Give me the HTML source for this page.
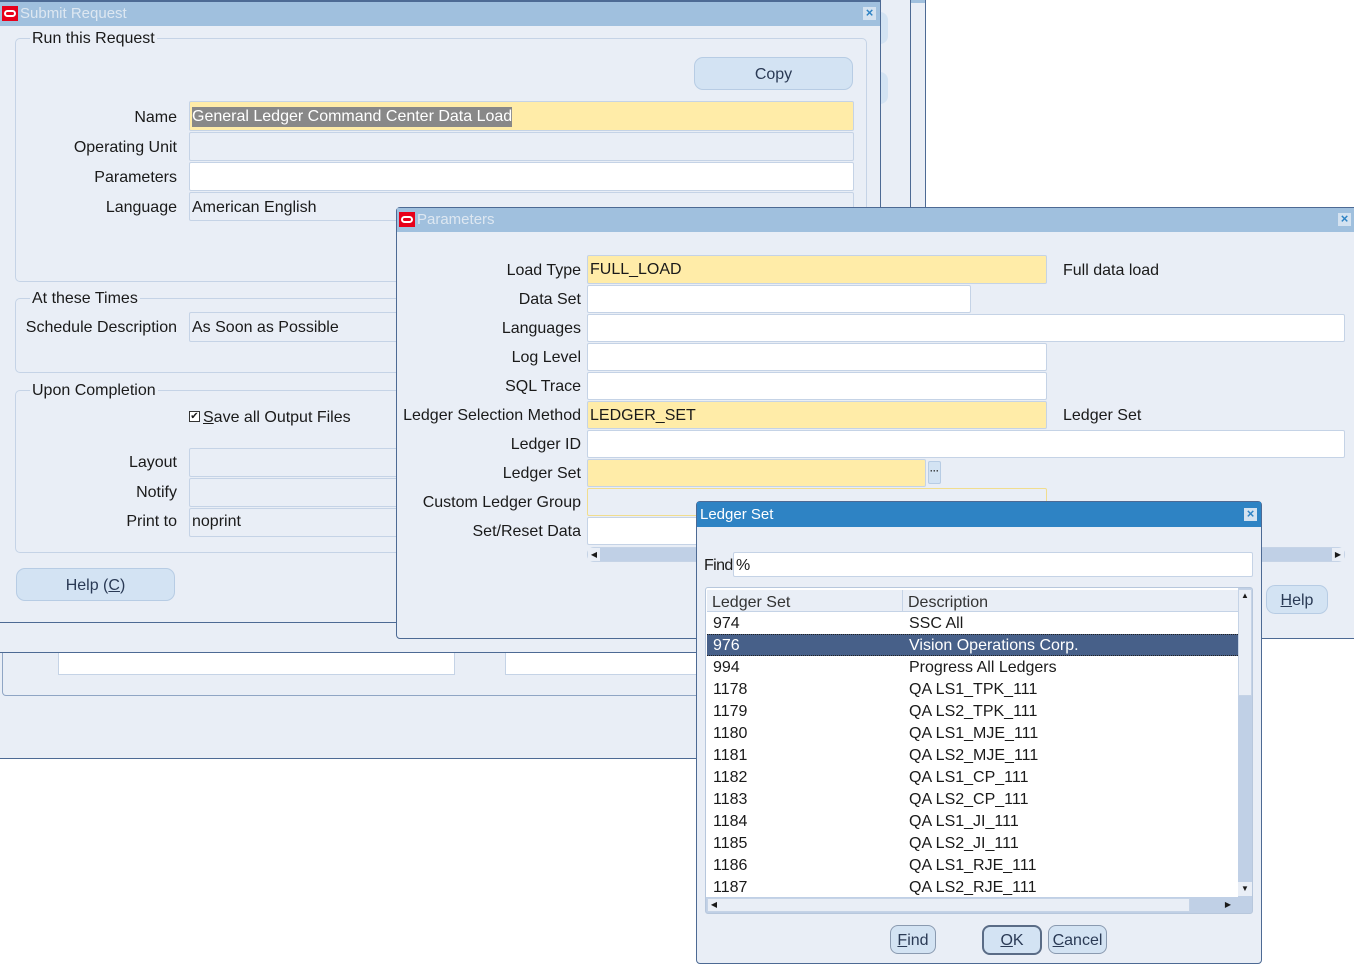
<!DOCTYPE html>
<html><head><meta charset="utf-8"><style>
*{box-sizing:border-box;margin:0;padding:0}
body{width:1354px;height:965px;background:#fff;position:relative;overflow:hidden;font-family:"Liberation Sans",Arial,sans-serif;font-size:16px;color:#1a1a1a}
.a{position:absolute}
.win{position:absolute;background:#e9eef6;border:1px solid #4d6a94}
.tb{position:absolute;left:0;right:0;top:0;height:24px;background:#a0c0de;color:#dde7f1;font-size:15px;line-height:24px;padding-left:20px}
.ico{position:absolute;left:2px;top:4px;width:16px;height:15px;background:#e8001a}
.ico:after{content:"";position:absolute;left:2px;top:4px;width:12px;height:7px;border:2px solid #fff;border-radius:5px;box-sizing:border-box}
.x{position:absolute;right:4px;top:5px;width:13px;height:13px;background:#d4e2f0;color:#2e83c4;font-size:13px;line-height:12px;text-align:center;font-weight:bold}
.grp{position:absolute;border:1px solid #c5d3e6;border-radius:5px}
.gl{position:absolute;background:#e9eef6;padding:0 2px;line-height:18px}
.lb{position:absolute;text-align:right;line-height:20px;white-space:nowrap}
.f{position:absolute;border:1px solid #c5d3e6;border-radius:2px;background:#e9eef6;line-height:26px;padding-left:2px;white-space:nowrap;overflow:hidden}
.w{background:#fff}
.y{background:#ffeca8}
.btn{position:absolute;background:#d3e3f3;border:1px solid #b7cce4;border-radius:9px;text-align:center;color:#2a3a55}
.row{position:absolute;left:1px;height:22px;line-height:23px;width:531px}
.row span{position:absolute}
</style></head><body>

<div class="a" style="left:0;top:0;width:926px;height:759px;background:#e9eef6;border-right:1px solid #4d6a94;border-bottom:1px solid #4d6a94"></div>
<div class="a" style="left:910px;top:0;width:1px;height:653px;background:#4d6a94"></div>
<div class="a" style="left:911px;top:0;width:14px;height:3px;background:#a0c0de"></div>
<div class="a" style="left:0;top:652px;width:926px;height:1px;background:#4d6a94"></div>
<div class="a" style="left:2px;top:653px;width:924px;height:43px;border:1px solid #8fa5c4;border-top:none;border-radius:0 0 0 4px"></div>
<div class="a" style="left:58px;top:653px;width:397px;height:22px;background:#fff;border:1px solid #c5d3e6;border-top:none"></div>
<div class="a" style="left:505px;top:653px;width:300px;height:22px;background:#fff;border:1px solid #c5d3e6;border-top:none"></div>
<div class="a" style="left:880px;top:12px;width:8px;height:32px;background:#d3e3f3;border-radius:0 8px 8px 0"></div>
<div class="a" style="left:880px;top:72px;width:8px;height:32px;background:#d3e3f3;border-radius:0 8px 8px 0"></div>

<div class="win" style="left:-1px;top:0;width:882px;height:623px;border-top:2px solid #4d6a94">
  <div class="tb"><div class="ico"></div>Submit Request<div class="x">×</div></div>
  <div class="grp" style="left:15px;top:36px;width:852px;height:244px"></div>
  <div class="gl" style="left:30px;top:28px">Run this Request</div>
  <div class="btn" style="left:694px;top:55px;width:159px;height:33px;line-height:33px">Copy</div>
  <div class="lb" style="right:703px;top:106px">Name</div>
  <div class="f y" style="left:189px;top:99px;width:665px;height:30px;line-height:29px"><span style="background:#888;color:#fff;line-height:20px;display:inline-block">General Ledger Command Center Data Load</span></div>
  <div class="lb" style="right:703px;top:136px">Operating Unit</div>
  <div class="f" style="left:189px;top:130px;width:665px;height:29px"></div>
  <div class="lb" style="right:703px;top:166px">Parameters</div>
  <div class="f w" style="left:189px;top:160px;width:665px;height:29px"></div>
  <div class="lb" style="right:703px;top:196px">Language</div>
  <div class="f" style="left:189px;top:190px;width:665px;height:29px;line-height:29px">American English</div>

  <div class="grp" style="left:15px;top:296px;width:852px;height:75px"></div>
  <div class="gl" style="left:30px;top:288px">At these Times</div>
  <div class="lb" style="right:703px;top:316px">Schedule Description</div>
  <div class="f" style="left:189px;top:310px;width:400px;height:30px;line-height:29px">As Soon as Possible</div>

  <div class="grp" style="left:15px;top:388px;width:852px;height:163px"></div>
  <div class="gl" style="left:30px;top:380px">Upon Completion</div>
  <div class="a" style="left:189px;top:409px;width:11px;height:11px;border:1px solid #333;background:#fff;font-size:10px;line-height:9px;text-align:center">✔</div>
  <div class="a" style="left:203px;top:406px;line-height:20px"><u>S</u>ave all Output Files</div>
  <div class="lb" style="right:703px;top:451px">Layout</div>
  <div class="f" style="left:189px;top:446px;width:400px;height:29px"></div>
  <div class="lb" style="right:703px;top:481px">Notify</div>
  <div class="f" style="left:189px;top:476px;width:400px;height:29px"></div>
  <div class="lb" style="right:703px;top:510px">Print to</div>
  <div class="f" style="left:189px;top:506px;width:400px;height:29px">noprint</div>
  <div class="btn" style="left:16px;top:566px;width:159px;height:33px;line-height:33px">Help (<u>C</u>)</div>
</div>

<div class="win" style="left:396px;top:207px;width:960px;height:432px;border-radius:4px 0 0 4px">
  <div class="tb"><div class="ico"></div>Parameters<div class="x">×</div></div>
  <div class="lb" style="right:774px;top:53px">Load Type</div>
  <div class="f y" style="left:190px;top:47px;width:460px;height:29px;line-height:28px">FULL_LOAD</div>
  <div class="a" style="left:666px;top:53px;line-height:20px">Full data load</div>
  <div class="lb" style="right:774px;top:82px">Data Set</div>
  <div class="f w" style="left:190px;top:77px;width:384px;height:28px"></div>
  <div class="lb" style="right:774px;top:111px">Languages</div>
  <div class="f w" style="left:190px;top:106px;width:758px;height:28px"></div>
  <div class="lb" style="right:774px;top:140px">Log Level</div>
  <div class="f w" style="left:190px;top:135px;width:460px;height:28px"></div>
  <div class="lb" style="right:774px;top:169px">SQL Trace</div>
  <div class="f w" style="left:190px;top:164px;width:460px;height:28px"></div>
  <div class="lb" style="right:774px;top:198px">Ledger Selection Method</div>
  <div class="f y" style="left:190px;top:193px;width:460px;height:28px;line-height:28px">LEDGER_SET</div>
  <div class="a" style="left:666px;top:198px;line-height:20px">Ledger Set</div>
  <div class="lb" style="right:774px;top:227px">Ledger ID</div>
  <div class="f w" style="left:190px;top:222px;width:758px;height:28px"></div>
  <div class="lb" style="right:774px;top:256px">Ledger Set</div>
  <div class="f y" style="left:190px;top:251px;width:339px;height:28px"></div>
  <div class="a" style="left:531px;top:253px;width:13px;height:23px;background:#d3e3f3;border:1px solid #b7cce4;border-radius:2px;font-size:9px;line-height:18px;text-align:center;font-weight:bold">···</div>
  <div class="lb" style="right:774px;top:285px">Custom Ledger Group</div>
  <div class="f" style="left:190px;top:280px;width:460px;height:28px;border-color:#f1dd8e"></div>
  <div class="lb" style="right:774px;top:314px">Set/Reset Data</div>
  <div class="f w" style="left:190px;top:309px;width:460px;height:28px"></div>
  <div class="a" style="left:190px;top:339px;width:758px;height:15px;background:#c0d0e6;border:1px solid #c5d3e6;border-radius:7px"></div>
  <div class="a" style="left:191px;top:340px;width:12px;height:13px;background:#e9eef6;font-size:8px;line-height:13px;text-align:center">◀</div>
  <div class="a" style="left:935px;top:340px;width:12px;height:13px;background:#e9eef6;font-size:8px;line-height:13px;text-align:center">▶</div>
  <div class="btn" style="left:869px;top:377px;width:62px;height:29px;line-height:29px"><u>H</u>elp</div>
</div>

<div class="win" style="left:696px;top:501px;width:566px;height:463px;border-radius:4px">
  <div class="a" style="left:0;right:0;top:0;height:25px;background:#2e83c4;color:#fff;line-height:25px;padding-left:3px;font-size:15px;font-family:'Liberation Sans',Arial,sans-serif">Ledger Set<div class="x" style="background:#d4e2f0;top:6px">×</div></div>
  <div class="a" style="left:7px;top:54px;line-height:20px;letter-spacing:-0.6px">Find</div>
  <div class="f w" style="left:36px;top:50px;width:520px;height:25px;line-height:25px">%</div>
  <div class="a" style="left:8px;top:85px;width:548px;height:327px;border:1px solid #b7c7dc;background:#c0d0e6;border-radius:3px;overflow:hidden">
    <div class="a" style="left:0;top:0;width:532px;height:309px;background:#fff"></div>
    <div class="a" style="left:1px;top:2px;width:531px;height:22px;background:#e9eef6;border-bottom:1px solid #c5d3e6"></div>
    <div class="a" style="left:196px;top:2px;width:1px;height:22px;background:#c5d3e6"></div>
    <div class="a" style="left:6px;top:4px;line-height:22px;color:#333">Ledger Set</div>
    <div class="a" style="left:202px;top:4px;line-height:22px;color:#333">Description</div>
    <div class="row" style="top:24px"><span style="left:6px">974</span><span style="left:202px">SSC All</span></div>
    <div class="row" style="top:46px;background:#476089;color:#fff;border-top:1px dotted #222;border-bottom:1px dotted #222;line-height:21px"><span style="left:6px">976</span><span style="left:202px">Vision Operations Corp.</span></div>
    <div class="row" style="top:68px"><span style="left:6px">994</span><span style="left:202px">Progress All Ledgers</span></div>
    <div class="row" style="top:90px"><span style="left:6px">1178</span><span style="left:202px">QA LS1_TPK_111</span></div>
    <div class="row" style="top:112px"><span style="left:6px">1179</span><span style="left:202px">QA LS2_TPK_111</span></div>
    <div class="row" style="top:134px"><span style="left:6px">1180</span><span style="left:202px">QA LS1_MJE_111</span></div>
    <div class="row" style="top:156px"><span style="left:6px">1181</span><span style="left:202px">QA LS2_MJE_111</span></div>
    <div class="row" style="top:178px"><span style="left:6px">1182</span><span style="left:202px">QA LS1_CP_111</span></div>
    <div class="row" style="top:200px"><span style="left:6px">1183</span><span style="left:202px">QA LS2_CP_111</span></div>
    <div class="row" style="top:222px"><span style="left:6px">1184</span><span style="left:202px">QA LS1_JI_111</span></div>
    <div class="row" style="top:244px"><span style="left:6px">1185</span><span style="left:202px">QA LS2_JI_111</span></div>
    <div class="row" style="top:266px"><span style="left:6px">1186</span><span style="left:202px">QA LS1_RJE_111</span></div>
    <div class="row" style="top:288px"><span style="left:6px">1187</span><span style="left:202px">QA LS2_RJE_111</span></div>
    <div class="a" style="left:532px;top:1px;width:14px;height:107px;background:#e9eef6;border:1px solid #c5d3e6"></div>
    <div class="a" style="left:532px;top:1px;width:14px;height:14px;font-size:8px;text-align:center;line-height:14px">▲</div>
    <div class="a" style="left:532px;top:294px;width:14px;height:14px;font-size:8px;text-align:center;line-height:14px;background:#e9eef6">▼</div>
    <div class="a" style="left:1px;top:310px;width:483px;height:14px;background:#e9eef6;border:1px solid #c5d3e6"></div>
    <div class="a" style="left:2px;top:310px;width:12px;height:14px;font-size:8px;line-height:14px;text-align:center">◀</div>
    <div class="a" style="left:516px;top:310px;width:12px;height:14px;font-size:8px;line-height:14px;text-align:center">▶</div>
  </div>
  <div class="btn" style="left:193px;top:423px;width:46px;height:29px;line-height:29px;border-color:#8a9ab0;border-radius:8px"><u>F</u>ind</div>
  <div class="btn" style="left:285px;top:423px;width:60px;height:30px;line-height:28px;border:2px solid #5a6c86;border-radius:8px"><u>O</u>K</div>
  <div class="btn" style="left:351px;top:423px;width:59px;height:29px;line-height:29px;border-color:#8a9ab0;border-radius:8px"><u>C</u>ancel</div>
</div>
</body></html>
